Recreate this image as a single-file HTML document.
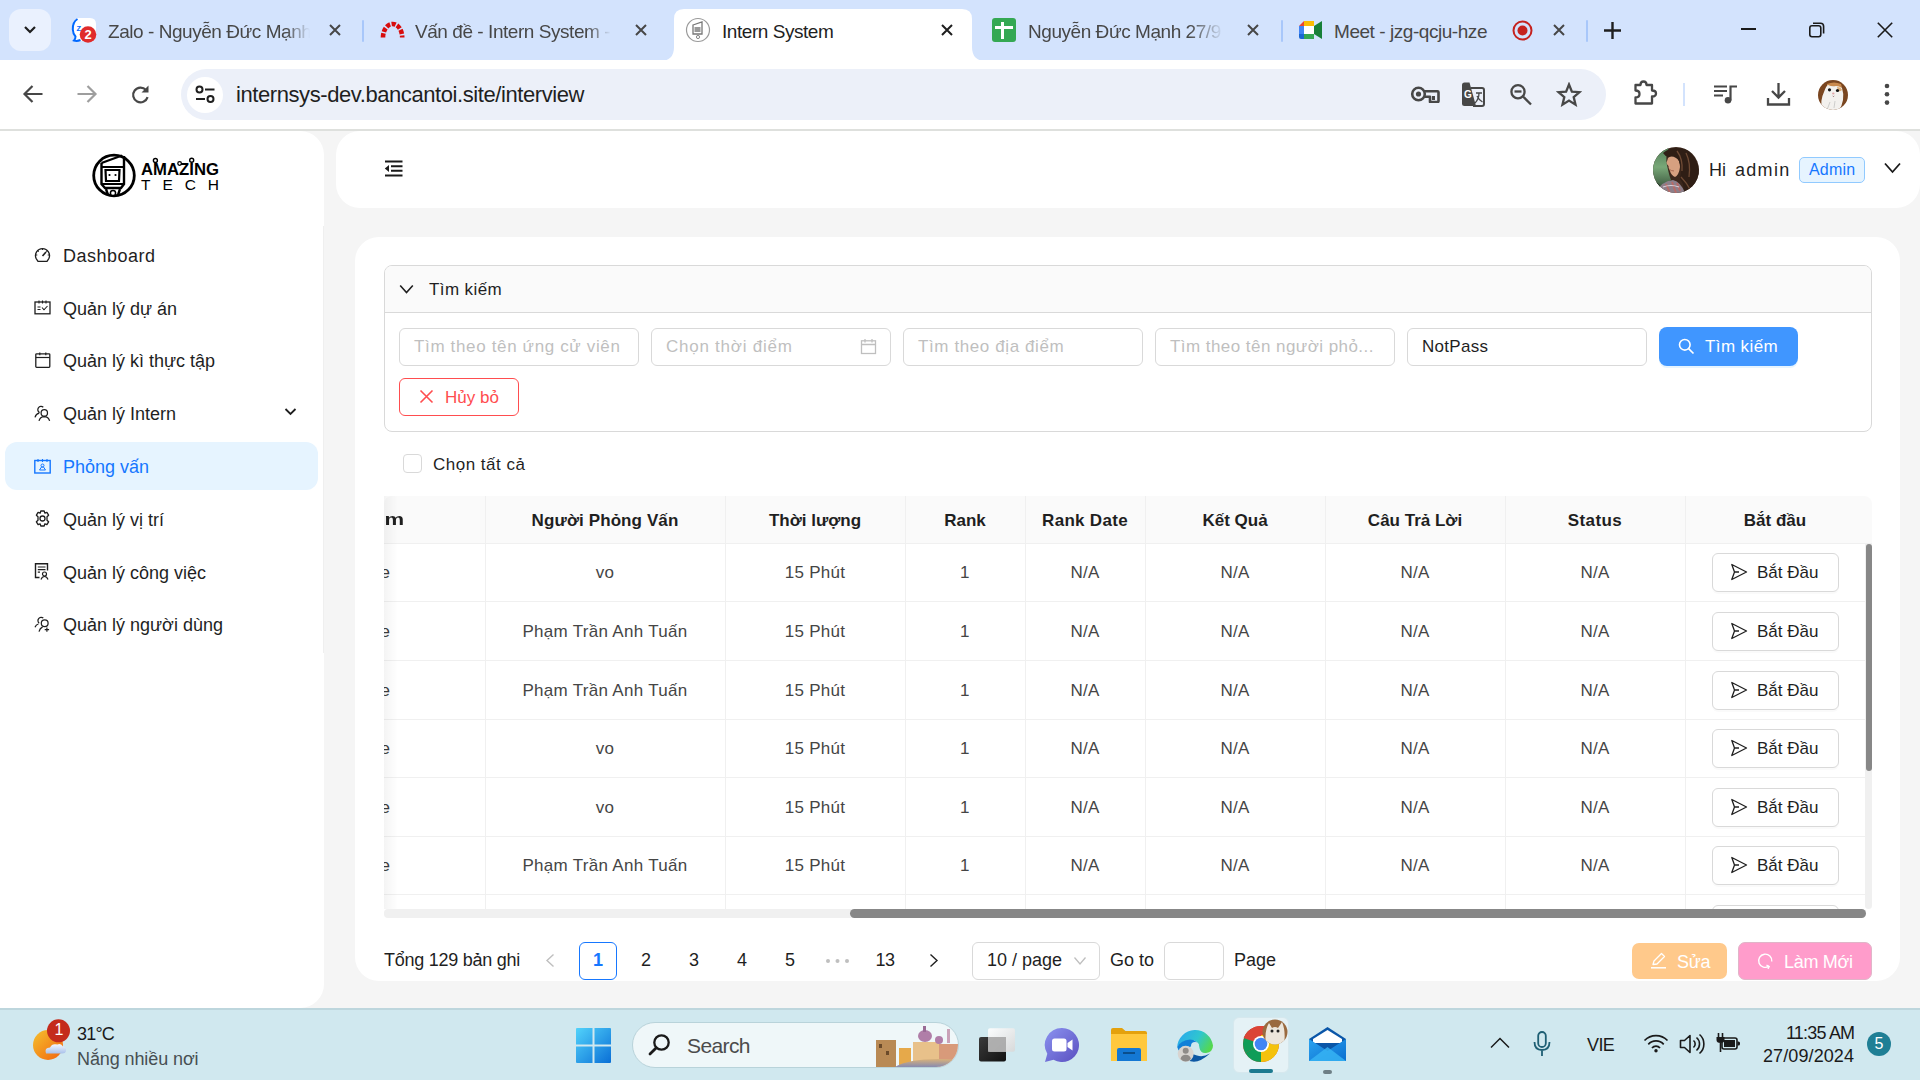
<!DOCTYPE html>
<html><head><meta charset="utf-8">
<style>
*{box-sizing:border-box;margin:0;padding:0}
html,body{width:1920px;height:1080px;overflow:hidden;background:#f5f5f5;font-family:"Liberation Sans",sans-serif;color:#1f1f1f}
.a{position:absolute}
svg{display:block}
/* chrome */
#tabstrip{left:0;top:0;width:1920px;height:60px;background:#d3e3fd}
#toolbar{left:0;top:60px;width:1920px;height:69px;background:#fff}
#tbline{left:0;top:129px;width:1920px;height:2px;background:#dee0dd}
.tabt{font-size:19px;color:#1f1f1f;white-space:nowrap;top:21px;letter-spacing:-0.45px}
.tsep{width:2px;height:22px;top:20px;background:#a8c7fa;border-radius:1px}
/* page */
#sidebar{left:0;top:131px;width:324px;height:877px;background:#fff;border-radius:0 24px 24px 0}
#header{left:336px;top:131px;width:1584px;height:77px;background:#fff;border-radius:24px}
#card{left:355px;top:237px;width:1545px;height:744px;background:#fff;border-radius:24px}
.nav{left:63px;font-size:18px;color:#1f1f1f;white-space:nowrap}
.navi{left:34px}

.pb{font-size:17px;color:#bfbfbf;white-space:nowrap;letter-spacing:0.7px}
.inp{height:38px;width:240px;top:328px;border:1px solid #d9d9d9;border-radius:6px;background:#fff}
.th{font-size:17px;font-weight:bold;color:#1f1f1f;white-space:nowrap;text-align:center;top:511px}
.td{font-size:17px;color:#454545;white-space:nowrap;text-align:center;letter-spacing:0.3px}
.vl{width:1px;background:#f0f0f0}
.hl{height:1px;background:#f0f0f0;left:384px;width:1481px}
.bd{left:1712px;width:127px;height:39px;border:1px solid #d9d9d9;border-radius:6px;background:#fff;box-shadow:0 2px 0 rgba(0,0,0,0.02)}
.pg{font-size:18px;color:#1f1f1f;white-space:nowrap;top:950px}
#taskbar{left:0;top:1008px;width:1920px;height:72px;background:#d0e8ef;border-top:2px solid #bdd6dd}
</style></head><body>
<!-- ============ CHROME TAB STRIP ============ -->
<div class="a" id="tabstrip"></div>
<div class="a" style="left:9px;top:9px;width:42px;height:42px;border-radius:12px;background:#eaf1fe"></div>
<svg class="a" style="left:22px;top:24px" width="16" height="12" viewBox="0 0 16 12"><path d="M3 3l5 5 5-5" stroke="#1f1f1f" stroke-width="2.2" fill="none"/></svg>


<!-- tab 1 zalo -->
<svg class="a" style="left:71px;top:17px" width="27" height="26" viewBox="0 0 27 26"><path d="M7 1 H19 Q25 1 25 7 V18 Q25 24 19 24 H9 Q5 25 2 23 Q4 21 3.5 19 Q1 16 1 12 Q1 3 7 1 Z" fill="#fff"/><path d="M6.5 2 Q1.5 5 1.8 12.5 Q2 17 4.5 19.5 Q4.5 22 3 23.5 Q6 24.5 9.5 23" fill="none" stroke="#0068ff" stroke-width="2"/><text x="5.5" y="14" font-family="Liberation Sans" font-weight="bold" font-size="7.5" fill="#0068ff">Z</text><circle cx="17" cy="17.5" r="8.3" fill="#e02b2b"/><text x="17" y="22" text-anchor="middle" font-family="Liberation Sans" font-weight="bold" font-size="13" fill="#fff">2</text></svg>
<div class="a tabt" style="left:108px;width:202px;overflow:hidden;color:#474747;-webkit-mask-image:linear-gradient(90deg,#000 88%,transparent)">Zalo - Nguyễn Đức Mạnh</div>
<svg class="a" style="left:329px;top:24px" width="12" height="12" viewBox="0 0 12 12"><path d="M1 1L11 11M11 1L1 11" stroke="#474747" stroke-width="2"/></svg>
<div class="a tsep" style="left:362px"></div>
<!-- tab 2 redmine -->
<svg class="a" style="left:380px;top:20px" width="25" height="18" viewBox="0 0 25 18"><path d="M3 17.5 A9.6 13.5 0 0 1 22.2 17.5" stroke="#d80d0d" stroke-width="4.6" fill="none" stroke-dasharray="4.2 1.5"/></svg>
<div class="a tabt" style="left:415px;width:196px;overflow:hidden;color:#474747;-webkit-mask-image:linear-gradient(90deg,#000 88%,transparent)">Vấn đề - Intern System - Amazing</div>
<svg class="a" style="left:635px;top:24px" width="12" height="12" viewBox="0 0 12 12"><path d="M1 1L11 11M11 1L1 11" stroke="#474747" stroke-width="2"/></svg>
<!-- active tab -->
<svg class="a" style="left:660px;top:9px" width="326" height="52" viewBox="0 0 326 52"><path d="M0 52 Q14 52 14 38 L14 10 Q14 0 24 0 L302 0 Q312 0 312 10 L312 38 Q312 52 326 52 Z" fill="#fff"/></svg>
<svg class="a" style="left:685px;top:17px" width="26" height="26" viewBox="0 0 26 26"><circle cx="13" cy="13" r="11.5" fill="#fff" stroke="#9a9a9a" stroke-width="1.2"/><path d="M8 8 L17 5 L17 17 L8 17 Z" fill="none" stroke="#777" stroke-width="1.3"/><rect x="9.5" y="10" width="6" height="5" fill="#999"/><circle cx="13" cy="20" r="1.6" fill="none" stroke="#888" stroke-width="1"/></svg>
<div class="a tabt" style="left:722px;color:#1f1f1f">Intern System</div>
<svg class="a" style="left:941px;top:24px" width="12" height="12" viewBox="0 0 12 12"><path d="M1 1L11 11M11 1L1 11" stroke="#1f1f1f" stroke-width="2"/></svg>
<!-- tab 4 sheets -->
<div class="a" style="left:992px;top:18px;width:24px;height:24px;border-radius:3px;background:#34a853"></div>
<div class="a" style="left:1001px;top:22px;width:3px;height:17px;background:#fff"></div>
<div class="a" style="left:995px;top:26px;width:18px;height:3px;background:#fff"></div>
<div class="a tabt" style="left:1028px;width:196px;overflow:hidden;color:#474747;-webkit-mask-image:linear-gradient(90deg,#000 82%,transparent)">Nguyễn Đức Mạnh 27/9 - Google</div>
<svg class="a" style="left:1247px;top:24px" width="12" height="12" viewBox="0 0 12 12"><path d="M1 1L11 11M11 1L1 11" stroke="#474747" stroke-width="2"/></svg>
<div class="a tsep" style="left:1281px"></div>
<!-- tab 5 meet -->
<svg class="a" style="left:1299px;top:21px" width="23" height="18" viewBox="0 0 23 18"><path d="M0 5 L5 0 L5 5 Z" fill="#ea4335"/><path d="M5 0 L15 0 L15 5 L5 5 Z" fill="#fbbc04"/><path d="M0 5 L5 5 L5 13 L0 13 Z" fill="#4285f4"/><path d="M0 13 L5 13 L5 18 L2 18 Q0 18 0 16 Z" fill="#1967d2"/><path d="M5 13 L15 13 L15 18 L5 18 Z" fill="#34a853"/><path d="M15 5 L15 13 L23 18 L23 0 Z" fill="#188038"/><path d="M15 0 L15 5 L10 5 Z" fill="#fbbc04"/><rect x="5" y="5" width="10" height="8" fill="#fff"/></svg>
<div class="a tabt" style="left:1334px;color:#474747">Meet - jzg-qcju-hze</div>
<svg class="a" style="left:1512px;top:20px" width="21" height="21" viewBox="0 0 21 21"><circle cx="10.5" cy="10.5" r="9" fill="none" stroke="#c5221f" stroke-width="2"/><circle cx="10.5" cy="10.5" r="5" fill="#c5221f"/></svg>
<svg class="a" style="left:1553px;top:24px" width="12" height="12" viewBox="0 0 12 12"><path d="M1 1L11 11M11 1L1 11" stroke="#474747" stroke-width="2"/></svg>
<div class="a tsep" style="left:1586px"></div>
<svg class="a" style="left:1604px;top:22px" width="17" height="17" viewBox="0 0 17 17"><path d="M8.5 0V17M0 8.5H17" stroke="#1f1f1f" stroke-width="2.4"/></svg>
<!-- window controls -->
<div class="a" style="left:1741px;top:28px;width:15px;height:2px;background:#1a1a1a"></div>
<svg class="a" style="left:1808px;top:21px" width="18" height="18" viewBox="0 0 18 18"><rect x="1.8" y="4.8" width="11" height="11" rx="2.2" fill="none" stroke="#1a1a1a" stroke-width="1.6"/><path d="M5 2.2 H12.5 Q15.6 2.2 15.6 5.3 V12.5" fill="none" stroke="#1a1a1a" stroke-width="1.6"/></svg>
<svg class="a" style="left:1877px;top:22px" width="16" height="16" viewBox="0 0 16 16"><path d="M0.8 0.8L15.2 15.2M15.2 0.8L0.8 15.2" stroke="#1a1a1a" stroke-width="1.6"/></svg>

<div class="a" id="toolbar"></div>
<div class="a" id="tbline"></div>

<!-- toolbar -->
<svg class="a" style="left:22px;top:84px" width="22" height="20" viewBox="0 0 22 20"><path d="M20.5 10H3M10.5 2L2.5 10L10.5 18" stroke="#474747" stroke-width="2.2" fill="none"/></svg>
<svg class="a" style="left:76px;top:84px" width="22" height="20" viewBox="0 0 22 20"><path d="M1.5 10H19M11.5 2L19.5 10L11.5 18" stroke="#9e9e9e" stroke-width="2.2" fill="none"/></svg>
<svg class="a" style="left:130px;top:84px" width="22" height="22" viewBox="0 0 22 22"><path d="M17.6 13.2 A7.4 7.4 0 1 1 16 6" stroke="#474747" stroke-width="2.2" fill="none"/><path d="M18.5 1.5 V8.5 H11.5 Z" fill="#474747"/></svg>
<div class="a" style="left:181px;top:69px;width:1425px;height:51px;border-radius:26px;background:#ecf0f9"></div>
<div class="a" style="left:187px;top:77px;width:36px;height:36px;border-radius:18px;background:#fff"></div>
<svg class="a" style="left:195px;top:85px" width="21" height="19" viewBox="0 0 21 19"><circle cx="4.5" cy="4.5" r="3" fill="none" stroke="#1f1f1f" stroke-width="2"/><path d="M10 4.5H19.5M1 14H10" stroke="#1f1f1f" stroke-width="2"/><circle cx="15.5" cy="14" r="3" fill="none" stroke="#1f1f1f" stroke-width="2"/></svg>
<div class="a" style="left:236px;top:82px;font-size:22px;letter-spacing:-0.42px;color:#1f1f1f;white-space:nowrap">internsys-dev.bancantoi.site/interview</div>
<svg class="a" style="left:1410px;top:86px" width="30" height="17" viewBox="0 0 30 17"><circle cx="8.5" cy="8" r="6.3" fill="none" stroke="#474747" stroke-width="2.6"/><circle cx="8.5" cy="8" r="2.6" fill="#474747"/><path d="M14 5.2 H27.5 Q28.5 5.2 28.5 6.2 V15 Q28.5 16 27.5 16 H20 V10.8 H14.5" fill="none" stroke="#474747" stroke-width="2.6" stroke-linejoin="round"/><rect x="22" y="10" width="3" height="4" fill="#474747"/></svg>
<svg class="a" style="left:1460px;top:81px" width="26" height="27" viewBox="0 0 26 27"><path d="M2 4 Q2 1.5 4.5 1.5 H9.5 L16 25 H4.5 Q2 25 2 22.5 Z" fill="#474747"/><path d="M10.5 7 H22 Q24 7 24 9 V23 Q24 25 22 25 H13" fill="none" stroke="#474747" stroke-width="2"/><text x="4" y="16.5" font-family="Liberation Sans" font-weight="bold" font-size="10" fill="#fff">G</text><path d="M16 12H22M19 12 Q19 18 15 22M17 15 Q19 19 22.5 21" stroke="#474747" stroke-width="1.3" fill="none"/></svg>
<svg class="a" style="left:1509px;top:83px" width="24" height="24" viewBox="0 0 24 24"><circle cx="9" cy="8.7" r="6.6" fill="none" stroke="#474747" stroke-width="2.3"/><path d="M14 13.5 L22 21.5" stroke="#474747" stroke-width="2.3"/><path d="M5.5 8.5H12.5" stroke="#474747" stroke-width="2.3"/></svg>
<svg class="a" style="left:1556px;top:82px" width="26" height="25" viewBox="0 0 26 25"><path d="M13 2.5 L15.9 9.6 L23.5 10.2 L17.7 15.1 L19.5 22.6 L13 18.5 L6.5 22.6 L8.3 15.1 L2.5 10.2 L10.1 9.6 Z" fill="none" stroke="#474747" stroke-width="2.3" stroke-linejoin="miter"/></svg>
<svg class="a" style="left:1633px;top:80px" width="26" height="26" viewBox="0 0 26 26"><path d="M2.5 5 H7.5 Q7.5 1.5 10.5 1.5 Q13.5 1.5 13.5 5 H19 V10.5 Q23 10.5 23 13.5 Q23 16.5 19 16.5 V23.5 H2.5 V17.5 Q6.5 17.5 6.5 14 Q6.5 10.5 2.5 10.5 Z" fill="none" stroke="#474747" stroke-width="2.3" stroke-linejoin="round"/></svg>
<div class="a" style="left:1683px;top:83px;width:2px;height:23px;background:#d3e3fd"></div>
<svg class="a" style="left:1713px;top:84px" width="25" height="20" viewBox="0 0 25 20"><path d="M1 2.5H14M1 7H14M1 11.5H10" stroke="#474747" stroke-width="2.2"/><path d="M17.5 16.5V2.5H24" stroke="#474747" stroke-width="2.2" fill="none"/><circle cx="15" cy="16.3" r="3.3" fill="#474747"/></svg>
<svg class="a" style="left:1766px;top:82px" width="26" height="25" viewBox="0 0 26 25"><path d="M12.5 1V15M6 9L12.5 15.5L19 9" stroke="#474747" stroke-width="2.3" fill="none"/><path d="M2 16V22.5H23V16" stroke="#474747" stroke-width="2.3" fill="none"/></svg>
<svg class="a" style="left:1818px;top:80px" width="30" height="30" viewBox="0 0 30 30"><defs><clipPath id="cav"><circle cx="15" cy="15" r="15"/></clipPath></defs><g clip-path="url(#cav)"><rect width="30" height="30" fill="#7a4620"/><path d="M9 4 Q16 1 23 4 L24 8 Q20 8 17 7 Q13 6 9 8 Z" fill="#c98a4e"/><path d="M4 30 Q2 20 6 12 Q8 6 10 5 Q14 7 18 6 Q21 6 24 8 Q26 14 25 20 Q24 26 21 30 Z" fill="#f3f1ee"/><path d="M19 7 Q23 7 24 10 Q22 12 20 11 Z" fill="#dcae78"/><circle cx="11.5" cy="9.8" r="1.6" fill="#111"/><circle cx="19.5" cy="10.5" r="1.6" fill="#111"/><ellipse cx="15.3" cy="13.6" rx="1.2" ry="1" fill="#e0a4a8"/><path d="M14.8 16 Q15.5 17 16.2 16" stroke="#8a5a60" stroke-width="0.9" fill="none"/><path d="M12 22 L9 30 M17 21 L16 28" stroke="#a9a9a9" stroke-width="0.5"/></g></svg>
<svg class="a" style="left:1884px;top:83px" width="6" height="23" viewBox="0 0 6 23"><circle cx="3" cy="3" r="2.3" fill="#474747"/><circle cx="3" cy="11.3" r="2.3" fill="#474747"/><circle cx="3" cy="19.6" r="2.3" fill="#474747"/></svg>


<!-- ============ PAGE ============ -->
<div class="a" id="sidebar"></div>

<div class="a" style="left:323px;top:226px;width:1px;height:427px;background:#efefef"></div>
<!-- logo -->
<svg class="a" style="left:92px;top:153px" width="130" height="46" viewBox="0 0 130 46">
<circle cx="22" cy="22.5" r="20.3" fill="none" stroke="#000" stroke-width="2.8"/>
<path d="M9.5 10 L30 2.5" stroke="#000" stroke-width="2.2"/>
<path d="M9.5 10 V31 L13 35 H29 L32 31 V3" fill="none" stroke="#000" stroke-width="2.4"/>
<path d="M9.5 14 H31" stroke="#000" stroke-width="2"/>
<path d="M13.5 17 H27.5 L27 28 H14 Z" fill="none" stroke="#000" stroke-width="2.2"/>
<circle cx="17.5" cy="22" r="1.1" fill="#000"/><circle cx="23.5" cy="22" r="1.1" fill="#000"/>
<path d="M10 31 H31" stroke="#000" stroke-width="2"/>
<path d="M14 36 L16 42 M28 36 L26 42" stroke="#000" stroke-width="2.4"/>
<circle cx="21" cy="40" r="2.6" fill="#fff" stroke="#000" stroke-width="1.5"/>
<text x="49" y="22" font-family="Liberation Sans" font-weight="bold" font-size="16.5" fill="#000" textLength="78" lengthAdjust="spacingAndGlyphs">AMAZING</text>
<circle cx="63.4" cy="7.5" r="2" fill="#fff" stroke="#000" stroke-width="1.4"/><path d="M63.4 9.5V12" stroke="#000" stroke-width="1.3"/>
<circle cx="87.6" cy="10.5" r="1.8" fill="#fff" stroke="#000" stroke-width="1.3"/>
<circle cx="99.7" cy="7.2" r="2" fill="#fff" stroke="#000" stroke-width="1.4"/><path d="M99.7 9.2V12" stroke="#000" stroke-width="1.3"/>
<text x="49" y="37" font-family="Liberation Sans" font-size="15.5" fill="#000" textLength="78" lengthAdjust="spacing">TECH</text>
</svg>
<!-- nav -->
<div class="a" style="left:5px;top:442px;width:313px;height:48px;border-radius:12px;background:#e6f4ff"></div>
<svg class="a navi" style="top:246px" width="17" height="17" viewBox="0 0 17 17"><path d="M4 15.3 L2.2 12.6 A7 7 0 1 1 14.8 12.6 L13 15.3 Z" fill="none" stroke="#1f1f1f" stroke-width="1.3" stroke-linejoin="round"/><path d="M8.5 10 L12 6" stroke="#1f1f1f" stroke-width="1.6"/><path d="M8.5 2.6V4M3.8 4.6L4.7 5.6M13.2 4.6L12.3 5.6M1.9 9H3.3M13.7 9H15.1" stroke="#1f1f1f" stroke-width="1.1"/></svg>
<div class="a nav" style="top:246px;letter-spacing:0.5px">Dashboard</div>
<svg class="a navi" style="top:299px" width="17" height="17" viewBox="0 0 17 17"><rect x="1" y="3" width="15" height="11.8" fill="none" stroke="#1f1f1f" stroke-width="1.3"/><path d="M5 1.5V4.5M8.5 1.5V4.5M12 1.5V4.5" stroke="#1f1f1f" stroke-width="1.1"/><path d="M3.5 8H6.5M3.5 10.5H6.5M8 8.5L10 10.8L13.5 7" stroke="#1f1f1f" stroke-width="1.1" fill="none"/></svg>
<div class="a nav" style="top:299px">Quản lý dự án</div>
<svg class="a navi" style="top:352px" width="17" height="17" viewBox="0 0 17 17"><rect x="1.8" y="1.8" width="14" height="13.5" rx="0.8" fill="none" stroke="#1f1f1f" stroke-width="1.3"/><path d="M1.8 5.5H15.8" stroke="#1f1f1f" stroke-width="1.2"/><path d="M5.8 0.5V3.3M11.8 0.5V3.3" stroke="#1f1f1f" stroke-width="1.2"/></svg>
<div class="a nav" style="top:351px">Quản lý kì thực tập</div>
<svg class="a navi" style="top:405px" width="17" height="17" viewBox="0 0 17 17"><path d="M9.3 2.2 A3.3 3.3 0 1 0 5.6 7.6" fill="none" stroke="#1f1f1f" stroke-width="1.25"/><path d="M1 12.3 Q2 8.8 5.2 8.2" fill="none" stroke="#1f1f1f" stroke-width="1.25"/><circle cx="10.3" cy="7.9" r="3.2" fill="none" stroke="#1f1f1f" stroke-width="1.25"/><path d="M5 15.8 Q6 11.7 10.3 11.6 Q14.6 11.7 15.6 15.8" fill="none" stroke="#1f1f1f" stroke-width="1.25"/></svg>
<div class="a nav" style="top:404px">Quản lý Intern</div>
<svg class="a" style="left:284px;top:407px" width="13" height="10" viewBox="0 0 13 10"><path d="M1.5 2L6.5 7L11.5 2" stroke="#1f1f1f" stroke-width="1.8" fill="none"/></svg>
<svg class="a navi" style="top:458px" width="17" height="17" viewBox="0 0 17 17"><rect x="0.8" y="2.5" width="15.4" height="12.5" fill="none" stroke="#1677ff" stroke-width="1.4"/><path d="M4 1V4M8.5 1V4M13 1V4" stroke="#1677ff" stroke-width="1.1"/><circle cx="8.5" cy="7.5" r="1.5" fill="none" stroke="#1677ff" stroke-width="1"/><path d="M5.5 12 L7.5 9 L9.5 9 L11.5 12 M5.5 12H11.5" stroke="#1677ff" stroke-width="1" fill="none"/></svg>
<div class="a nav" style="top:457px;color:#1677ff">Phỏng vấn</div>
<svg class="a navi" style="top:510px" width="17" height="17" viewBox="0 0 17 17"><path d="M6.8 1 H10.2 L10.8 3.2 L12.9 2.3 L14.6 5.2 L13 6.8 L13 10.2 L14.6 11.8 L12.9 14.7 L10.8 13.8 L10.2 16 H6.8 L6.2 13.8 L4.1 14.7 L2.4 11.8 L4 10.2 L4 6.8 L2.4 5.2 L4.1 2.3 L6.2 3.2 Z" fill="none" stroke="#1f1f1f" stroke-width="1.3" stroke-linejoin="round"/><circle cx="8.5" cy="8.5" r="2.5" fill="none" stroke="#1f1f1f" stroke-width="1.3"/></svg>
<div class="a nav" style="top:510px">Quản lý vị trí</div>
<svg class="a navi" style="top:563px" width="17" height="18" viewBox="0 0 17 18"><path d="M5.5 14.5 H1.5 V0.8 H13.5 V7.5" fill="none" stroke="#1f1f1f" stroke-width="1.4"/><path d="M3.8 4H11.5M3.8 6.6H11.5M3.8 9.2H6" stroke="#1f1f1f" stroke-width="1.2"/><circle cx="10.5" cy="11" r="2" fill="none" stroke="#1f1f1f" stroke-width="1.2"/><path d="M7 16.5 Q8 13.5 10.5 13.5 Q13 13.5 14 16.5" fill="none" stroke="#1f1f1f" stroke-width="1.2"/></svg>
<div class="a nav" style="top:563px">Quản lý công việc</div>
<svg class="a navi" style="top:616px" width="17" height="17" viewBox="0 0 17 17"><path d="M9.3 2 A3.3 3.3 0 1 0 5.2 7.2" fill="none" stroke="#1f1f1f" stroke-width="1.25"/><path d="M1 11.3 Q2 8.6 4.4 8" fill="none" stroke="#1f1f1f" stroke-width="1.25"/><circle cx="10.7" cy="7.3" r="3.4" fill="none" stroke="#1f1f1f" stroke-width="1.25"/><path d="M5 15.6 Q5.8 12.2 8.6 10.9" fill="none" stroke="#1f1f1f" stroke-width="1.25"/><path d="M12.9 11.4V15.8M10.7 13.6H15.1" stroke="#1f1f1f" stroke-width="1.2"/></svg>
<div class="a nav" style="top:615px">Quản lý người dùng</div>

<div class="a" id="header"></div>

<svg class="a" style="left:384px;top:160px" width="19" height="17" viewBox="0 0 19 17"><path d="M1 1.5H18.5M7 6.2H18.5M7 10.8H18.5M1 15.5H18.5" stroke="#1a1a1a" stroke-width="2"/><path d="M0.8 8.5 L5 5 V12 Z" fill="#1a1a1a"/></svg>
<svg class="a" style="left:1653px;top:147px" width="46" height="46" viewBox="0 0 46 46"><defs><clipPath id="cav2"><circle cx="23" cy="23" r="23"/></clipPath><linearGradient id="grn" x1="0" y1="0" x2="0" y2="1"><stop offset="0" stop-color="#4f7a55"/><stop offset="0.5" stop-color="#79a878"/><stop offset="1" stop-color="#3d5a40"/></linearGradient></defs><g clip-path="url(#cav2)">
<rect width="46" height="46" fill="#3b271c"/>
<path d="M0 0 H16 Q12 10 14 18 Q16 28 18 33 L6 40 H0 Z" fill="url(#grn)"/>
<path d="M0 34 Q5 35 8 40 L0 46 Z" fill="#1e2a1e"/>
<path d="M15 11 Q18 8 23 9 Q27 14 27 20 Q26 28 22 30 Q18 28 17 24 Q15 21 15.5 19 Q13.5 17 13.5 15.5 Q14.5 13 15 11 Z" fill="#d6a080"/>
<path d="M16 22 Q18 24 21 24" stroke="#a86a52" stroke-width="1" fill="none"/>
<path d="M10 6 Q20 -2 34 3 Q45 10 46 26 V46 H30 Q32 38 27 32 Q29 22 26 14 Q22 8 15 10 Q12 9 10 6 Z" fill="#2f1e15"/>
<path d="M24 4 Q30 12 29 24 M33 6 Q38 16 36 30 M28 30 Q34 36 38 44" stroke="#6e4a34" stroke-width="1.3" fill="none"/>
<path d="M3 46 Q8 34 20 33 Q28 35 32 46 Z" fill="#8d7f8a"/>
<path d="M8 42 L11 46 M13 37 L17 46 M19 35 L23 46 M24 36 L27 44" stroke="#b86a66" stroke-width="1.8"/>
<path d="M10 40 Q18 37 26 40" stroke="#d8d0d8" stroke-width="1.2" fill="none"/>
</g></svg>
<div class="a" style="left:1709px;top:160px;font-size:18px;color:#1f1f1f;white-space:nowrap">Hi</div>
<div class="a" style="left:1735px;top:160px;font-size:18px;color:#1f1f1f;white-space:nowrap;letter-spacing:1.3px">admin</div>
<div class="a" style="left:1799px;top:157px;width:66px;height:26px;border:1px solid #91caff;background:#e6f4ff;border-radius:5px"></div>
<div class="a" style="left:1809px;top:161px;font-size:16px;color:#1677ff;white-space:nowrap;letter-spacing:0.2px">Admin</div>
<svg class="a" style="left:1884px;top:162px" width="17" height="12" viewBox="0 0 17 12"><path d="M1 1.5L8.5 10L16 1.5" stroke="#1a1a1a" stroke-width="1.8" fill="none"/></svg>

<div class="a" id="card"></div>

<!-- collapse -->
<div class="a" style="left:384px;top:265px;width:1488px;height:167px;border:1px solid #d9d9d9;border-radius:8px;background:#fff;overflow:hidden"><div style="height:47px;background:#fafafa;border-bottom:1px solid #d9d9d9"></div></div>
<svg class="a" style="left:399px;top:284px" width="15" height="11" viewBox="0 0 15 11"><path d="M1.2 1.5L7.5 8.5L13.8 1.5" stroke="#1f1f1f" stroke-width="1.6" fill="none"/></svg>
<div class="a" style="left:429px;top:280px;font-size:17px;color:#1f1f1f;white-space:nowrap;letter-spacing:0.4px">Tìm kiếm</div>
<div class="a inp" style="left:399px"></div>
<div class="a pb" style="left:414px;top:337px;letter-spacing:0.65px">Tìm theo tên ứng cử viên</div>
<div class="a inp" style="left:651px"></div>
<div class="a pb" style="left:666px;top:337px;letter-spacing:0.75px">Chọn thời điểm</div>
<svg class="a" style="left:860px;top:338px" width="17" height="17" viewBox="0 0 17 17"><rect x="1.5" y="2.8" width="14" height="12.7" fill="none" stroke="#bfbfbf" stroke-width="1.3"/><path d="M1.5 6.5H15.5M5 1V4.5M12 1V4.5" stroke="#bfbfbf" stroke-width="1.3"/></svg>
<div class="a inp" style="left:903px"></div>
<div class="a pb" style="left:918px;top:337px;letter-spacing:0.6px">Tìm theo địa điểm</div>
<div class="a inp" style="left:1155px"></div>
<div class="a pb" style="left:1170px;top:337px;letter-spacing:0.45px">Tìm theo tên người phỏ...</div>
<div class="a inp" style="left:1407px"></div>
<div class="a" style="left:1422px;top:337px;font-size:17px;color:#1f1f1f;white-space:nowrap;letter-spacing:0.3px">NotPass</div>
<div class="a" style="left:1659px;top:327px;width:139px;height:39px;border-radius:8px;background:#4096ff;box-shadow:0 2px 0 rgba(5,145,255,0.1)"></div>
<svg class="a" style="left:1678px;top:338px" width="17" height="17" viewBox="0 0 17 17"><circle cx="6.8" cy="6.8" r="5.3" fill="none" stroke="#fff" stroke-width="1.6"/><path d="M10.6 10.6L15.5 15.5" stroke="#fff" stroke-width="1.7"/></svg>
<div class="a" style="left:1705px;top:337px;font-size:17px;color:#fff;white-space:nowrap;letter-spacing:0.4px">Tìm kiếm</div>
<div class="a" style="left:399px;top:378px;width:120px;height:38px;border:1px solid #ff4d4f;border-radius:6px;background:#fff"></div>
<svg class="a" style="left:419px;top:389px" width="15" height="15" viewBox="0 0 15 15"><path d="M1.5 1.5L13.5 13.5M13.5 1.5L1.5 13.5" stroke="#ff4d4f" stroke-width="1.6"/></svg>
<div class="a" style="left:445px;top:388px;font-size:17px;color:#ff4d4f;white-space:nowrap">Hủy bỏ</div>
<!-- checkbox -->
<div class="a" style="left:403px;top:454px;width:19px;height:19px;border:1px solid #d9d9d9;border-radius:4px;background:#fff"></div>
<div class="a" style="left:433px;top:455px;font-size:17px;color:#1f1f1f;white-space:nowrap;letter-spacing:0.5px">Chọn tất cả</div>
<!-- table -->
<div class="a" style="left:384px;top:496px;width:1488px;height:423px;overflow:hidden;border-radius:8px 8px 0 0">
  <div class="a" style="left:0;top:0;width:1488px;height:48px;background:#fafafa"></div>
</div>
<div class="a hl" style="top:543px;width:1488px"></div>
<div class="a hl" style="top:601px"></div>
<div class="a hl" style="top:660px"></div>
<div class="a hl" style="top:719px"></div>
<div class="a hl" style="top:777px"></div>
<div class="a hl" style="top:836px"></div>
<div class="a hl" style="top:894px"></div>
<div class="a vl" style="left:485px;top:496px;height:413px"></div>
<div class="a vl" style="left:725px;top:496px;height:413px"></div>
<div class="a vl" style="left:905px;top:496px;height:413px"></div>
<div class="a vl" style="left:1025px;top:496px;height:413px"></div>
<div class="a vl" style="left:1145px;top:496px;height:413px"></div>
<div class="a vl" style="left:1325px;top:496px;height:413px"></div>
<div class="a vl" style="left:1505px;top:496px;height:413px"></div>
<div class="a vl" style="left:1685px;top:496px;height:413px"></div>
<div class="a" style="left:384px;top:496px;width:101px;height:413px;overflow:hidden">
  <div class="a" style="right:81px;top:14px;font-size:17px;font-weight:bold;color:#1f1f1f;white-space:nowrap;transform:scaleX(1.3);transform-origin:right">m</div>
  <div class="a" style="right:95px;top:67px;font-size:17px;color:#3d3d3d;white-space:nowrap">Online</div>
  <div class="a" style="right:95px;top:126px;font-size:17px;color:#3d3d3d;white-space:nowrap">Online</div>
  <div class="a" style="right:95px;top:185px;font-size:17px;color:#3d3d3d;white-space:nowrap">Online</div>
  <div class="a" style="right:95px;top:243px;font-size:17px;color:#3d3d3d;white-space:nowrap">Online</div>
  <div class="a" style="right:95px;top:302px;font-size:17px;color:#3d3d3d;white-space:nowrap">Online</div>
  <div class="a" style="right:95px;top:360px;font-size:17px;color:#3d3d3d;white-space:nowrap">Online</div>
  <div class="a" style="left:0;top:0;width:14px;height:413px;background:linear-gradient(90deg,rgba(0,0,0,0.045),rgba(0,0,0,0))"></div>
</div>
<div class="a th" style="left:485px;width:240px;letter-spacing:0.1px">Người Phỏng Vấn</div>
<div class="a th" style="left:725px;width:180px">Thời lượng</div>
<div class="a th" style="left:905px;width:120px">Rank</div>
<div class="a th" style="left:1025px;width:120px;letter-spacing:0.3px">Rank Date</div>
<div class="a th" style="left:1145px;width:180px">Kết Quả</div>
<div class="a th" style="left:1325px;width:180px">Câu Trả Lời</div>
<div class="a th" style="left:1505px;width:180px;letter-spacing:0.4px">Status</div>
<div class="a th" style="left:1685px;width:180px">Bắt đầu</div>
<div class="a td" style="left:485px;width:240px;top:563px">vo</div><div class="a td" style="left:725px;width:180px;top:563px">15 Phút</div><div class="a td" style="left:905px;width:120px;top:563px">1</div><div class="a td" style="left:1025px;width:120px;top:563px">N/A</div><div class="a td" style="left:1145px;width:180px;top:563px">N/A</div><div class="a td" style="left:1325px;width:180px;top:563px">N/A</div><div class="a td" style="left:1505px;width:180px;top:563px">N/A</div><div class="a bd" style="top:553px"></div><svg class="a" style="left:1730px;top:563px" width="18" height="18" viewBox="0 0 18 18"><path d="M1.8 1.5 L16.5 9 L1.8 16.5 L4.5 9 Z M4.5 9 H9" fill="none" stroke="#1f1f1f" stroke-width="1.3" stroke-linejoin="round"/></svg><div class="a td" style="left:1757px;top:563px;color:#1f1f1f;letter-spacing:0">Bắt Đầu</div>
<div class="a td" style="left:485px;width:240px;top:622px">Phạm Trần Anh Tuấn</div><div class="a td" style="left:725px;width:180px;top:622px">15 Phút</div><div class="a td" style="left:905px;width:120px;top:622px">1</div><div class="a td" style="left:1025px;width:120px;top:622px">N/A</div><div class="a td" style="left:1145px;width:180px;top:622px">N/A</div><div class="a td" style="left:1325px;width:180px;top:622px">N/A</div><div class="a td" style="left:1505px;width:180px;top:622px">N/A</div><div class="a bd" style="top:612px"></div><svg class="a" style="left:1730px;top:622px" width="18" height="18" viewBox="0 0 18 18"><path d="M1.8 1.5 L16.5 9 L1.8 16.5 L4.5 9 Z M4.5 9 H9" fill="none" stroke="#1f1f1f" stroke-width="1.3" stroke-linejoin="round"/></svg><div class="a td" style="left:1757px;top:622px;color:#1f1f1f;letter-spacing:0">Bắt Đầu</div>
<div class="a td" style="left:485px;width:240px;top:681px">Phạm Trần Anh Tuấn</div><div class="a td" style="left:725px;width:180px;top:681px">15 Phút</div><div class="a td" style="left:905px;width:120px;top:681px">1</div><div class="a td" style="left:1025px;width:120px;top:681px">N/A</div><div class="a td" style="left:1145px;width:180px;top:681px">N/A</div><div class="a td" style="left:1325px;width:180px;top:681px">N/A</div><div class="a td" style="left:1505px;width:180px;top:681px">N/A</div><div class="a bd" style="top:671px"></div><svg class="a" style="left:1730px;top:681px" width="18" height="18" viewBox="0 0 18 18"><path d="M1.8 1.5 L16.5 9 L1.8 16.5 L4.5 9 Z M4.5 9 H9" fill="none" stroke="#1f1f1f" stroke-width="1.3" stroke-linejoin="round"/></svg><div class="a td" style="left:1757px;top:681px;color:#1f1f1f;letter-spacing:0">Bắt Đầu</div>
<div class="a td" style="left:485px;width:240px;top:739px">vo</div><div class="a td" style="left:725px;width:180px;top:739px">15 Phút</div><div class="a td" style="left:905px;width:120px;top:739px">1</div><div class="a td" style="left:1025px;width:120px;top:739px">N/A</div><div class="a td" style="left:1145px;width:180px;top:739px">N/A</div><div class="a td" style="left:1325px;width:180px;top:739px">N/A</div><div class="a td" style="left:1505px;width:180px;top:739px">N/A</div><div class="a bd" style="top:729px"></div><svg class="a" style="left:1730px;top:739px" width="18" height="18" viewBox="0 0 18 18"><path d="M1.8 1.5 L16.5 9 L1.8 16.5 L4.5 9 Z M4.5 9 H9" fill="none" stroke="#1f1f1f" stroke-width="1.3" stroke-linejoin="round"/></svg><div class="a td" style="left:1757px;top:739px;color:#1f1f1f;letter-spacing:0">Bắt Đầu</div>
<div class="a td" style="left:485px;width:240px;top:798px">vo</div><div class="a td" style="left:725px;width:180px;top:798px">15 Phút</div><div class="a td" style="left:905px;width:120px;top:798px">1</div><div class="a td" style="left:1025px;width:120px;top:798px">N/A</div><div class="a td" style="left:1145px;width:180px;top:798px">N/A</div><div class="a td" style="left:1325px;width:180px;top:798px">N/A</div><div class="a td" style="left:1505px;width:180px;top:798px">N/A</div><div class="a bd" style="top:788px"></div><svg class="a" style="left:1730px;top:798px" width="18" height="18" viewBox="0 0 18 18"><path d="M1.8 1.5 L16.5 9 L1.8 16.5 L4.5 9 Z M4.5 9 H9" fill="none" stroke="#1f1f1f" stroke-width="1.3" stroke-linejoin="round"/></svg><div class="a td" style="left:1757px;top:798px;color:#1f1f1f;letter-spacing:0">Bắt Đầu</div>
<div class="a td" style="left:485px;width:240px;top:856px">Phạm Trần Anh Tuấn</div><div class="a td" style="left:725px;width:180px;top:856px">15 Phút</div><div class="a td" style="left:905px;width:120px;top:856px">1</div><div class="a td" style="left:1025px;width:120px;top:856px">N/A</div><div class="a td" style="left:1145px;width:180px;top:856px">N/A</div><div class="a td" style="left:1325px;width:180px;top:856px">N/A</div><div class="a td" style="left:1505px;width:180px;top:856px">N/A</div><div class="a bd" style="top:846px"></div><svg class="a" style="left:1730px;top:856px" width="18" height="18" viewBox="0 0 18 18"><path d="M1.8 1.5 L16.5 9 L1.8 16.5 L4.5 9 Z M4.5 9 H9" fill="none" stroke="#1f1f1f" stroke-width="1.3" stroke-linejoin="round"/></svg><div class="a td" style="left:1757px;top:856px;color:#1f1f1f;letter-spacing:0">Bắt Đầu</div>
<div class="a" style="left:384px;top:895px;width:1481px;height:14px;overflow:hidden"><div class="a bd" style="left:1328px;top:10px"></div></div>
<!-- scrollbars -->
<div class="a" style="left:1865px;top:544px;width:7px;height:365px;background:#f0f0f0;border-radius:0 0 4px 4px"></div>
<div class="a" style="left:1866px;top:544px;width:6px;height:227px;background:#878787;border-radius:3px"></div>
<div class="a" style="left:384px;top:909px;width:1482px;height:9px;background:#f0f0f0;border-radius:4px"></div>
<div class="a" style="left:850px;top:909px;width:1016px;height:9px;background:#878787;border-radius:4.5px"></div>
<!-- pagination -->
<div class="a pg" style="left:384px;letter-spacing:-0.25px">Tổng 129 bản ghi</div>
<svg class="a" style="left:544px;top:953px" width="12" height="15" viewBox="0 0 12 15"><path d="M9.5 1.5L3 7.5L9.5 13.5" stroke="#bfbfbf" stroke-width="1.4" fill="none"/></svg>
<div class="a" style="left:579px;top:942px;width:38px;height:38px;border:1px solid #1677ff;border-radius:6px;background:#fff"></div>
<div class="a pg" style="left:579px;width:38px;text-align:center;color:#1677ff;font-weight:bold">1</div>
<div class="a pg" style="left:627px;width:38px;text-align:center">2</div>
<div class="a pg" style="left:675px;width:38px;text-align:center">3</div>
<div class="a pg" style="left:723px;width:38px;text-align:center">4</div>
<div class="a pg" style="left:771px;width:38px;text-align:center">5</div>
<svg class="a" style="left:824px;top:957px" width="28" height="8" viewBox="0 0 28 8"><circle cx="4" cy="4" r="2" fill="#bfbfbf"/><circle cx="13.5" cy="4" r="2" fill="#bfbfbf"/><circle cx="23" cy="4" r="2" fill="#bfbfbf"/></svg>
<div class="a pg" style="left:866px;width:38px;text-align:center;letter-spacing:-0.5px">13</div>
<svg class="a" style="left:928px;top:953px" width="12" height="15" viewBox="0 0 12 15"><path d="M2.5 1.5L9 7.5L2.5 13.5" stroke="#1f1f1f" stroke-width="1.4" fill="none"/></svg>
<div class="a" style="left:972px;top:942px;width:128px;height:38px;border:1px solid #d9d9d9;border-radius:6px;background:#fff"></div>
<div class="a pg" style="left:987px">10 / page</div>
<svg class="a" style="left:1073px;top:956px" width="14" height="10" viewBox="0 0 14 10"><path d="M1.5 1.5L7 8L12.5 1.5" stroke="#bfbfbf" stroke-width="1.3" fill="none"/></svg>
<div class="a pg" style="left:1110px">Go to</div>
<div class="a" style="left:1164px;top:942px;width:60px;height:38px;border:1px solid #d9d9d9;border-radius:6px;background:#fff"></div>
<div class="a pg" style="left:1234px">Page</div>
<div class="a" style="left:1632px;top:943px;width:95px;height:36px;border-radius:7px;background:#ffc98b"></div>
<svg class="a" style="left:1650px;top:952px" width="17" height="17" viewBox="0 0 17 17"><path d="M3 12.5L4 9L11.5 1.5L14.5 4.5L7 12Z" fill="none" stroke="#fff" stroke-width="1.3" stroke-linejoin="round"/><path d="M1 15.8H16" stroke="#fff" stroke-width="1.5"/></svg>
<div class="a" style="left:1677px;top:952px;font-size:18px;color:#fff;white-space:nowrap;letter-spacing:-0.3px">Sửa</div>
<div class="a" style="left:1738px;top:942px;width:134px;height:38px;border:1px solid #e0b5c8;border-radius:7px;background:#ff9ccb"></div>
<svg class="a" style="left:1757px;top:952px" width="17" height="17" viewBox="0 0 17 17"><path d="M12 14.2 A6.6 6.6 0 1 1 14.8 9.5" fill="none" stroke="#fff" stroke-width="1.4"/><path d="M9.5 13.2L12.2 14.5L11 17" fill="none" stroke="#fff" stroke-width="1.3"/></svg>
<div class="a" style="left:1784px;top:952px;font-size:18px;color:#fff;white-space:nowrap;letter-spacing:-0.3px">Làm Mới</div>


<div class="a" id="taskbar"></div>

<!-- weather -->
<svg class="a" style="left:30px;top:1018px" width="44" height="46" viewBox="0 0 44 46"><defs><linearGradient id="sun" x1="0" y1="0" x2="1" y2="1"><stop offset="0" stop-color="#f5c12e"/><stop offset="1" stop-color="#f2640f"/></linearGradient><linearGradient id="cld" x1="0" y1="0" x2="0" y2="1"><stop offset="0" stop-color="#f4f8ff"/><stop offset="1" stop-color="#a9c1ea"/></linearGradient></defs><circle cx="18" cy="27" r="15" fill="url(#sun)"/><path d="M16 35.5 Q14 29.5 20 29.5 Q22 25 27.5 26.5 Q30.5 25 33 28.5 Q36.5 29 36 33 Q35.5 35.5 32 35.5 Z" fill="url(#cld)"/><circle cx="28.5" cy="12.8" r="11.5" fill="#c42b1c"/></svg>
<div class="a" style="left:54px;top:1021px;width:10px;text-align:center;font-size:16px;color:#fff">1</div>
<div class="a" style="left:77px;top:1024px;font-size:18px;color:#1a1a1a;white-space:nowrap;letter-spacing:-0.8px">31°C</div>
<div class="a" style="left:77px;top:1049px;font-size:18px;color:#474f52;white-space:nowrap;letter-spacing:-0.1px">Nắng nhiều nơi</div>
<!-- start -->
<svg class="a" style="left:576px;top:1028px" width="35" height="35" viewBox="0 0 35 35"><defs><linearGradient id="win" x1="0" y1="0" x2="1" y2="1"><stop offset="0" stop-color="#52d3fb"/><stop offset="1" stop-color="#0a6fd6"/></linearGradient></defs><path d="M0 1 Q0 0 1 0 H16.5 V16.5 H0 Z M18.5 0 H34 Q35 0 35 1 V16.5 H18.5 Z M0 18.5 H16.5 V35 H1 Q0 35 0 34 Z M18.5 18.5 H35 V34 Q35 35 34 35 H18.5 Z" fill="url(#win)"/></svg>
<!-- search -->
<div class="a" style="left:632px;top:1022px;width:327px;height:46px;border-radius:23px;background:#eff7f9;border:1px solid #b9d3da;overflow:hidden">
<svg class="a" style="left:238px;top:3px" width="90" height="42" viewBox="0 0 90 42"><defs><linearGradient id="wat" x1="0" y1="0" x2="0" y2="1"><stop offset="0" stop-color="#d9b27a"/><stop offset="1" stop-color="#7d86b7"/></linearGradient></defs><rect x="5" y="14" width="20" height="28" fill="#b98a55"/><rect x="8" y="18" width="3" height="4" fill="#6b4a2a"/><rect x="15" y="25" width="3" height="4" fill="#6b4a2a"/><rect x="28" y="22" width="12" height="20" fill="#e6a94a"/><rect x="42" y="16" width="26" height="26" fill="#e8c18a"/><ellipse cx="54" cy="10" rx="7" ry="6" fill="#b07ea8"/><rect x="52" y="0" width="3" height="6" fill="#9a6b96"/><ellipse cx="68" cy="14" rx="4" ry="4" fill="#b07ea8"/><rect x="76" y="3" width="3" height="14" fill="#c9a2b8"/><rect x="68" y="18" width="22" height="24" fill="#d89a7a"/><path d="M22 42 Q40 30 90 34 V42 Z" fill="url(#wat)"/></svg>
</div>
<svg class="a" style="left:648px;top:1033px" width="24" height="24" viewBox="0 0 24 24"><circle cx="13.5" cy="9.5" r="7.2" fill="none" stroke="#1a1a1a" stroke-width="2.3"/><path d="M8.3 14.7L2 21" stroke="#1a1a1a" stroke-width="2.8" stroke-linecap="round"/></svg>
<div class="a" style="left:687px;top:1034px;font-size:21px;color:#4b4b4b;white-space:nowrap;letter-spacing:-0.6px">Search</div>
<!-- task view -->
<svg class="a" style="left:978px;top:1027px" width="38" height="36" viewBox="0 0 38 36"><defs><linearGradient id="tvw" x1="0" y1="0" x2="1" y2="1"><stop offset="0" stop-color="#ffffff"/><stop offset="1" stop-color="#d8d8d8"/></linearGradient><linearGradient id="tvb" x1="0" y1="0" x2="1" y2="1"><stop offset="0" stop-color="#3b3b3b"/><stop offset="1" stop-color="#111"/></linearGradient></defs><rect x="1" y="10" width="27" height="24.5" rx="2" fill="url(#tvb)"/><rect x="10" y="1.3" width="27" height="23.5" rx="2" fill="url(#tvw)" opacity="0.92"/><rect x="10" y="10" width="18" height="14.8" fill="#a9a9a9" opacity="0.9"/></svg>
<!-- chat -->
<svg class="a" style="left:1044px;top:1027px" width="36" height="36" viewBox="0 0 36 36"><defs><linearGradient id="tms" x1="0" y1="0" x2="1" y2="1"><stop offset="0" stop-color="#8b93f0"/><stop offset="1" stop-color="#5a4fc0"/></linearGradient></defs><path d="M18 1 A17 17 0 1 1 9.5 32.7 L1 35 L3.3 26.8 A17 17 0 0 1 18 1 Z" fill="url(#tms)"/><rect x="8" y="11.5" width="14.5" height="13" rx="2.5" fill="#fff"/><path d="M23.5 16 L28.5 12.5 V23.5 L23.5 20 Z" fill="#fff"/></svg>
<!-- folder -->
<svg class="a" style="left:1111px;top:1028px" width="36" height="34" viewBox="0 0 36 34"><path d="M0 2 Q0 0 2 0 H11 L14.5 3 H34 Q36 3 36 5 V10 H0 Z" fill="#e4a10d"/><path d="M0 6 H36 V33 H0 Z" fill="#ffc83d"/><path d="M6 22 Q6 20 8 20 H28 Q30 20 30 22 V33 H6 Z" fill="#1478d4"/><rect x="12" y="24" width="12" height="2" fill="#0a4e8c"/></svg>
<!-- edge -->
<svg class="a" style="left:1176px;top:1026px" width="38" height="38" viewBox="0 0 38 38"><defs><linearGradient id="edg" x1="0" y1="0.2" x2="1" y2="0.6"><stop offset="0" stop-color="#2aa8ee"/><stop offset="0.55" stop-color="#2fc6cf"/><stop offset="1" stop-color="#55d84e"/></linearGradient></defs>
<path d="M1.2 21 A18 18 0 0 1 37 19.5 Q37 26 30 27 Q24.5 27.5 23.5 22 Q22.5 14 15 14 Q6 14.5 1.2 21 Z" fill="url(#edg)"/>
<path d="M1.2 21 Q5 14 14 13.5 Q21.5 14 22.5 20 Q18 17 14 21 Q11 25 11 30 Q3 28 1.2 21 Z" fill="#1180d8"/>
<circle cx="19" cy="20" r="4" fill="#d0e8ef"/>
<path d="M11.5 33.5 Q20 40 34 27.5 Q27 31.5 21 29.5 Q15 27.5 13 29 Z" fill="#0d57a3"/>
<circle cx="9.7" cy="27.8" r="8" fill="#d8d4d0"/><circle cx="9.7" cy="24.8" r="3" fill="#8f8b88"/><path d="M4.5 33 Q5.5 28.8 9.7 28.8 Q13.9 28.8 14.9 33 Q12.5 35.5 9.7 35.5 Q6.9 35.5 4.5 33 Z" fill="#8f8b88"/>
</svg>
<!-- chrome active -->
<div class="a" style="left:1233px;top:1017px;width:56px;height:56px;border-radius:6px;background:#e5f2f6;border:1px solid #d6e8ee"></div>
<svg class="a" style="left:1242px;top:1025px" width="38" height="38" viewBox="0 0 38 38"><circle cx="19" cy="19" r="18" fill="#db4437"/><path d="M19 19 L3.4 28 A18 18 0 0 0 19 37 Z" fill="#0f9d58"/><path d="M19 19 L19 37 A18 18 0 0 0 34.6 28 L37 19 Z" fill="#f4c20d"/><path d="M3.4 28 A18 18 0 0 1 1 19 A18 18 0 0 1 9 4 L19 19 Z" fill="#0f9d58"/><path d="M19 19 L1.6 13 A18 18 0 0 1 19 1 A18 18 0 0 1 35 10 H19 Z" fill="#db4437"/><path d="M19 10 H35 A18 18 0 0 1 37 19 A18 18 0 0 1 28 34.5 L19 19 Z" fill="#f4c20d"/><circle cx="19" cy="19" r="8" fill="#fff"/><circle cx="19" cy="19" r="6.3" fill="#4285f4"/></svg>
<svg class="a" style="left:1262px;top:1019px" width="26" height="26" viewBox="0 0 26 26"><defs><clipPath id="cav3"><circle cx="13" cy="13" r="12.5"/></clipPath></defs><g clip-path="url(#cav3)"><rect width="26" height="26" fill="#9a6a3f"/><path d="M4 26 Q2 12 7 4 L10 9 Q13 7 16 9 L20 3 Q24 12 22 26 Z" fill="#ece6dc"/><circle cx="10" cy="12" r="1.5" fill="#222"/><circle cx="16" cy="12" r="1.5" fill="#222"/></g></svg>
<div class="a" style="left:1249px;top:1069px;width:24px;height:4px;border-radius:2px;background:#1d7a90"></div>
<!-- mail -->
<svg class="a" style="left:1309px;top:1027px" width="37" height="34" viewBox="0 0 37 34"><defs><linearGradient id="ml" x1="0" y1="0" x2="1" y2="1"><stop offset="0" stop-color="#2aa3f0"/><stop offset="1" stop-color="#0b6fd0"/></linearGradient></defs><path d="M0 12 L18.5 0 L37 12 V34 H0 Z" fill="#0a56a8"/><path d="M4 12 L18.5 3 L33 12 V16 H4Z" fill="#fff"/><path d="M0 12 L18.5 24 L37 12 V34 H0 Z" fill="url(#ml)"/><path d="M0 34 L18.5 20 L37 34 Z" fill="#38b6f5" opacity="0.8"/></svg>
<div class="a" style="left:1323px;top:1070px;width:9px;height:4px;border-radius:2px;background:#6e7f86"></div>
<!-- tray -->
<svg class="a" style="left:1490px;top:1037px" width="20" height="12" viewBox="0 0 20 12"><path d="M1 10.5L10 1.5L19 10.5" stroke="#1a1a1a" stroke-width="1.5" fill="none"/></svg>
<svg class="a" style="left:1533px;top:1031px" width="18" height="26" viewBox="0 0 18 26"><rect x="5.2" y="1" width="7.6" height="15" rx="3.8" fill="none" stroke="#1e5f74" stroke-width="1.8"/><path d="M1.5 11 Q1.5 19 9 19 Q16.5 19 16.5 11M9 19V25" fill="none" stroke="#1e5f74" stroke-width="1.8"/></svg>
<div class="a" style="left:1587px;top:1035px;font-size:18px;color:#1a1a1a;white-space:nowrap;letter-spacing:-0.6px">VIE</div>
<svg class="a" style="left:1643px;top:1034px" width="26" height="19" viewBox="0 0 26 19"><path d="M1.5 6.5 A16 16 0 0 1 24.5 6.5" stroke="#1a1a1a" stroke-width="1.7" fill="none"/><path d="M5.3 10.3 A10.5 10.5 0 0 1 20.7 10.3" stroke="#1a1a1a" stroke-width="1.7" fill="none"/><path d="M9 14 A5.2 5.2 0 0 1 17 14" stroke="#1a1a1a" stroke-width="1.7" fill="none"/><circle cx="13" cy="16.8" r="1.7" fill="#1a1a1a"/></svg>
<svg class="a" style="left:1679px;top:1033px" width="26" height="22" viewBox="0 0 26 22"><path d="M1.5 7.5 H5.5 L11 2.5 V19.5 L5.5 14.5 H1.5 Z" stroke="#1a1a1a" stroke-width="1.6" fill="none" stroke-linejoin="round"/><path d="M14.5 7.5 A4.5 4.5 0 0 1 14.5 14.5M17.5 4.5 A8.5 8.5 0 0 1 17.5 17.5M20.5 1.5 A12.5 12.5 0 0 1 20.5 20.5" stroke="#1a1a1a" stroke-width="1.6" fill="none"/></svg>
<svg class="a" style="left:1715px;top:1032px" width="26" height="21" viewBox="0 0 26 21"><path d="M3.5 1V5M7.5 1V5" stroke="#1a1a1a" stroke-width="1.6"/><path d="M1.5 5H9.5V8Q9.5 11 5.5 11Q1.5 11 1.5 8Z" fill="#1a1a1a"/><path d="M5.5 11V20" stroke="#1a1a1a" stroke-width="1.6"/><rect x="7" y="6" width="15" height="11" rx="2" fill="none" stroke="#1a1a1a" stroke-width="1.6"/><rect x="9" y="8" width="11" height="7" fill="#1a1a1a"/><path d="M22.5 9.5 H23.5 Q25 9.5 25 11 V12 Q25 13.5 23.5 13.5 H22.5" fill="#1a1a1a"/></svg>
<div class="a" style="left:1786px;top:1023px;font-size:18px;color:#1a1a1a;white-space:nowrap;letter-spacing:-0.8px">11:35 AM</div>
<div class="a" style="left:1763px;top:1046px;font-size:18px;color:#1a1a1a;white-space:nowrap;letter-spacing:0.1px">27/09/2024</div>
<div class="a" style="left:1867px;top:1032px;width:24px;height:24px;border-radius:12px;background:#1f7f95;color:#fff;font-size:16px;text-align:center;line-height:24px">5</div>

</body></html>
